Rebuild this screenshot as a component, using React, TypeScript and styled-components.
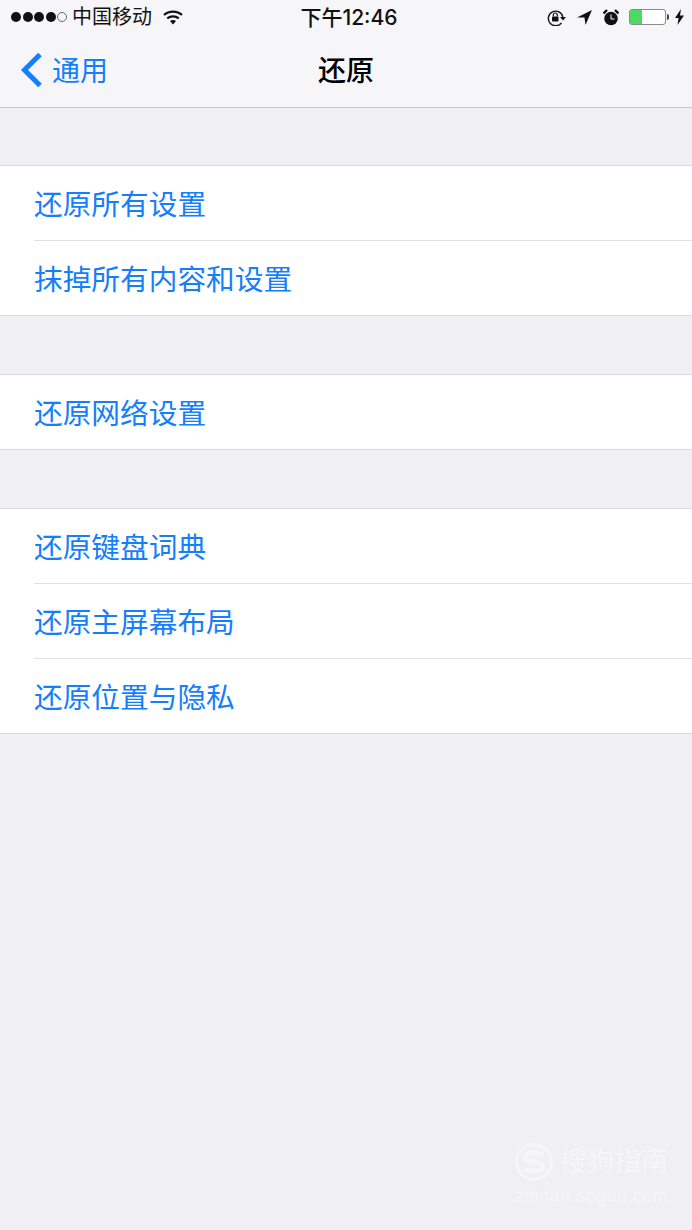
import React from "react";
import styled, { createGlobalStyle } from "styled-components";

const GlobalStyle = createGlobalStyle`
  html, body {
    margin: 0;
    padding: 0;
    background: #efeff4;
  }
  body {
    font-family: "Liberation Sans", "Noto Sans CJK SC", sans-serif;
  }
`;

const Screen = styled.div`
  width: 692px;
  height: 1230px;
  position: relative;
  overflow: hidden;
  background: #efeff4;
`;

const Header = styled.header`
  height: 107px;
  background: #f6f6f8;
  border-bottom: 1px solid #c9c9cc;
`;

const StatusBar = styled.div`
  height: 33px;
  display: flex;
  align-items: center;
  justify-content: space-between;
  padding: 1px 8px 0 11px;
  box-sizing: border-box;
  position: relative;
  color: #111;
`;

const StatusLeft = styled.div`
  display: flex;
  align-items: center;
`;

const Dots = styled.div`
  display: flex;
  gap: 1.5px;
  margin-right: 5px;
`;

const Dot = styled.span<{ $empty?: boolean }>`
  width: 10px;
  height: 10px;
  box-sizing: border-box;
  border-radius: 50%;
  background: ${(p) => (p.$empty ? "transparent" : "#111")};
  border: ${(p) => (p.$empty ? "1px solid #666" : "none")};
`;

const Carrier = styled.span`
  font-size: 20px;
  line-height: 33px;
  margin-right: 11px;
`;

const Clock = styled.span`
  position: absolute;
  left: 6px;
  right: 0;
  text-align: center;
  font-family: Inter, "Noto Sans CJK SC", sans-serif;
  font-size: 21px;
  font-weight: 500;
  line-height: 33px;
`;

const StatusRight = styled.div`
  display: flex;
  align-items: center;
  gap: 11px;
`;

const AlarmIcon = styled.svg`
  margin-right: -1px;
`;

const Battery = styled.div`
  width: 37px;
  height: 16px;
  box-sizing: border-box;
  border: 1px solid #8a8a8c;
  border-radius: 3px;
  background: #fff;
  position: relative;
  margin-right: -2px;

  &::after {
    content: "";
    position: absolute;
    right: -4px;
    top: 4px;
    width: 2px;
    height: 6px;
    background: #444;
    border-radius: 0 2px 2px 0;
  }
`;

const BatteryLevel = styled.div`
  width: 12px;
  height: 100%;
  background: #4cd964;
`;

const NavBar = styled.nav`
  height: 74px;
  position: relative;
  display: flex;
  align-items: center;
  padding: 0 0 2px 20px;
  box-sizing: border-box;
`;

const BackLink = styled.div`
  display: flex;
  align-items: center;
  gap: 8px;
  color: #157efb;
  font-size: 28px;
`;

const BackChevron = styled.svg`
  margin-top: 1px;
`;

const NavTitle = styled.h1`
  position: absolute;
  left: 0;
  right: 0;
  margin: 0;
  text-align: center;
  font-size: 28px;
  font-weight: 500;
  color: #000;
`;

const Content = styled.main`
  padding-top: 57px;
  display: flex;
  flex-direction: column;
  gap: 58px;
`;

const Group = styled.section`
  background: #fff;
  border-top: 1px solid #d9d9dc;
  border-bottom: 1px solid #d9d9dc;
`;

const Row = styled.div`
  height: 74px;
  margin-left: 34px;
  padding-bottom: 2px;
  display: flex;
  align-items: center;
  color: #157efb;
  font-size: 28.7px;
  box-sizing: border-box;

  & + & {
    border-top: 1px solid #dfdfe2;
    height: 75px;
  }
`;

const Watermark = styled.div`
  position: absolute;
  right: 24px;
  bottom: 23px;
  color: #f6f6f9;
  display: flex;
  flex-direction: column;
  align-items: flex-end;
`;

const WatermarkBrand = styled.div`
  display: flex;
  align-items: center;
  gap: 6px;
  font-size: 27px;
  line-height: 40px;
`;

const WatermarkUrl = styled.div`
  font-size: 18px;
  line-height: 22px;
  letter-spacing: 0.45px;
  margin-top: 3px;
`;

const groups = [
  ["还原所有设置", "抹掉所有内容和设置"],
  ["还原网络设置"],
  ["还原键盘词典", "还原主屏幕布局", "还原位置与隐私"],
];

const App = () => {
  return (
    <Screen>
      <GlobalStyle />
      <Header>
        <StatusBar>
          <StatusLeft>
            <Dots>
              <Dot />
              <Dot />
              <Dot />
              <Dot />
              <Dot $empty />
            </Dots>
            <Carrier>中国移动</Carrier>
            <svg width="20" height="15" viewBox="0 0 20 15">
              <path d="M1 5C6 .5 14 .5 19 5" fill="none" stroke="#111" strokeWidth="2.2" />
              <path d="M4.2 8.4C7.5 5.8 12.5 5.8 15.8 8.4" fill="none" stroke="#111" strokeWidth="2.2" />
              <path d="M7 11C8.8 9.8 11.2 9.8 13 11L10 14.5Z" fill="#111" />
            </svg>
          </StatusLeft>
          <Clock>下午12:46</Clock>
          <StatusRight>
            <svg width="19" height="17" viewBox="0 0 19 17">
              <path d="M14.5 13.8A7.3 7.3 0 1 1 15.8 8" fill="none" stroke="#111" strokeWidth="1.4" />
              <path d="M13 8L16 11.5L19 8Z" fill="#111" />
              <rect x="5" y="7.5" width="6.5" height="5" rx="1" fill="#111" />
              <path d="M6.3 7.5V6a2 2 0 0 1 4 0V7.5" fill="none" stroke="#111" strokeWidth="1.2" />
            </svg>
            <svg width="15" height="15" viewBox="0 0 15 15">
              <path d="M0 7.5L15 0L8.5 15L7.5 7.5Z" fill="#111" />
            </svg>
            <AlarmIcon width="16" height="17" viewBox="0 0 16 17">
              <circle cx="8" cy="9.5" r="6.8" fill="#111" />
              <path d="M8 5.5V10H11.5" fill="none" stroke="#fff" strokeWidth="1" />
              <path d="M0.5 4.5L4 1M15.5 4.5L12 1" stroke="#111" strokeWidth="2.4" />
            </AlarmIcon>
            <Battery>
              <BatteryLevel />
            </Battery>
            <svg width="9" height="16" viewBox="0 0 9 16">
              <path d="M6 0L0 9H3.5L2.5 16L9 6.5H5Z" fill="#111" />
            </svg>
          </StatusRight>
        </StatusBar>
        <NavBar>
          <BackLink>
            <BackChevron width="24" height="36" viewBox="0 0 24 36">
              <path d="M20 2.5L4.5 18L20 33.5" fill="none" stroke="#157efb" strokeWidth="5" />
            </BackChevron>
            通用
          </BackLink>
          <NavTitle>还原</NavTitle>
        </NavBar>
      </Header>
      <Content>
        {groups.map((rows) => (
          <Group key={rows[0]}>
            {rows.map((label) => (
              <Row key={label}>{label}</Row>
            ))}
          </Group>
        ))}
      </Content>
      <Watermark>
        <WatermarkBrand>
          <svg width="40" height="40" viewBox="0 0 40 40">
            <circle cx="20" cy="20" r="17.5" fill="none" stroke="#f6f6f9" strokeWidth="3" />
            <path d="M29 13C24 9.5 11 10 11 15.5C11 21 29 18.5 29 24.5C29 30 16 30.5 11 27" fill="none" stroke="#f6f6f9" strokeWidth="5" />
          </svg>
          搜狗指南
        </WatermarkBrand>
        <WatermarkUrl>zhinan.sogou.com</WatermarkUrl>
      </Watermark>
    </Screen>
  );
};

export default App;
